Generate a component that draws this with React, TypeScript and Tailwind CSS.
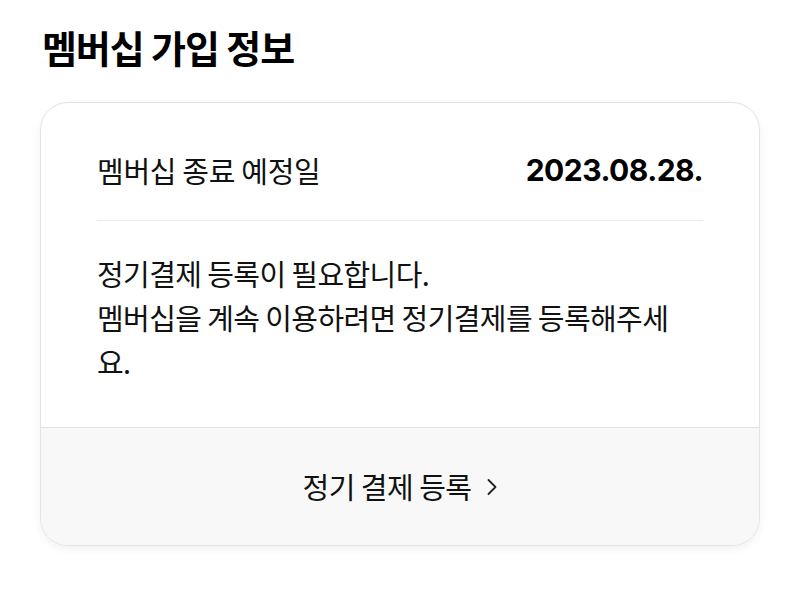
export default function App() {
  const font = { fontFamily: '"Noto Sans CJK KR", "Noto Sans", sans-serif' };
  return (
    <div className="min-h-[594px] w-[800px] bg-white px-10 pt-[20px]" style={font}>
      <h1 className="pl-[2px] text-[38px] font-bold leading-[54px] tracking-[-1.1px] text-black">멤버십 가입 정보</h1>
      <div className="mt-[28px] overflow-hidden rounded-[28px] border border-[#e4e4e4] bg-white shadow-[0_3px_8px_rgba(0,0,0,0.06)]">
        <div className="px-[56px]">
          <div className="flex h-[118px] items-center justify-between border-b border-[#ececec] pt-[18px]">
            <span className="text-[29px] tracking-[-0.3px] text-[#111]">멤버십 종료 예정일</span>
            <span className="text-[30px] font-bold tracking-[-0.5px] text-black" style={{ fontFamily: 'Inter, sans-serif' }}>
              2023.08.28.
            </span>
          </div>
          <p className="pb-[44px] pt-[30px] text-[29px] leading-[44px] tracking-[-0.6px] text-[#111]">
            정기결제 등록이 필요합니다.
            <br />
            멤버십을 계속 이용하려면 정기결제를 등록해주세
            <br />
            요.
          </p>
        </div>
        <button
          type="button"
          className="flex h-[118px] w-full items-center justify-center gap-[14px] border-t border-[#e2e2e2] bg-[#f8f8f8] text-[29px] tracking-[-0.5px] text-[#111]"
        >
          <span>정기 결제 등록</span>
          <svg width="12" height="20" viewBox="0 0 12 20" fill="none" aria-hidden="true">
            <path d="M2.5 3l7 7-7 7" stroke="#222" strokeWidth="1.8" strokeLinecap="round" strokeLinejoin="round" />
          </svg>
        </button>
      </div>
    </div>
  );
}
